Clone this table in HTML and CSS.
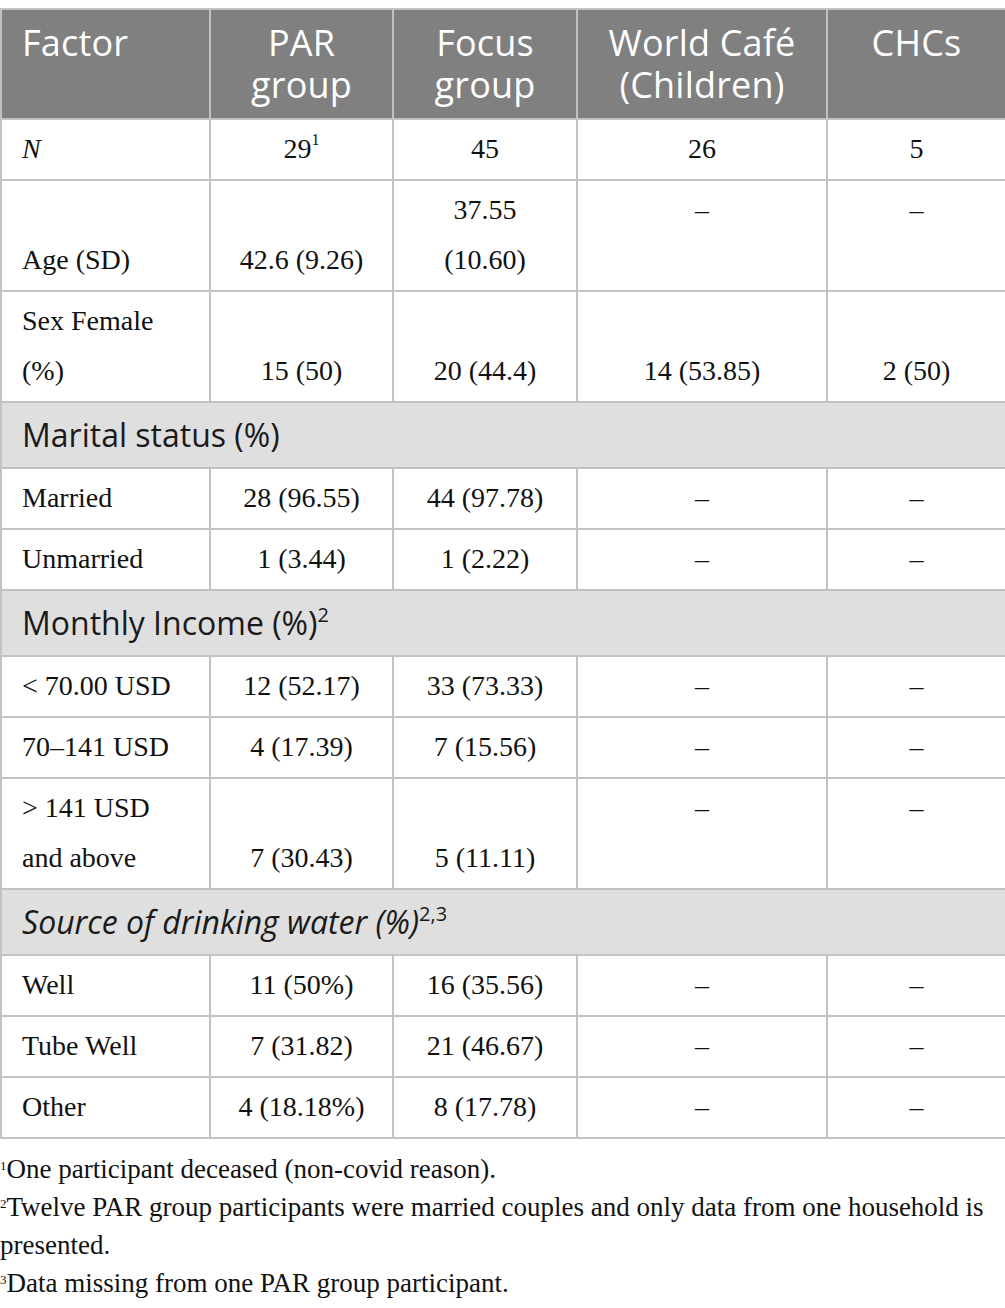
FILE: index.html
```html
<!DOCTYPE html>
<html>
<head>
<meta charset="utf-8">
<link rel="stylesheet" href="styles.css">
</head>
<body>
<table class="data">
  <colgroup>
    <col class="c1"><col class="c2"><col class="c3"><col class="c4"><col class="c5">
  </colgroup>
  <thead>
    <tr class="head">
      <th class="left"><span class="hl">Factor</span></th>
      <th><span class="hl">PAR</span><span class="hl">group</span></th>
      <th><span class="hl">Focus</span><span class="hl">group</span></th>
      <th><span class="hl">World Café</span><span class="hl">(Children)</span></th>
      <th><span class="hl">CHCs</span></th>
    </tr>
  </thead>
  <tbody>
    <tr>
      <td class="left"><i>N</i></td>
      <td>29<sup class="fn">1</sup></td>
      <td>45</td>
      <td>26</td>
      <td>5</td>
    </tr>
    <tr>
      <td class="left"><br>Age (SD)</td>
      <td>42.6 (9.26)</td>
      <td>37.55<br>(10.60)</td>
      <td class="top">–</td>
      <td class="top">–</td>
    </tr>
    <tr>
      <td class="left">Sex Female<br>(%)</td>
      <td>15 (50)</td>
      <td>20 (44.4)</td>
      <td>14 (53.85)</td>
      <td>2 (50)</td>
    </tr>
    <tr class="section">
      <td colspan="5">Marital status (%)</td>
    </tr>
    <tr>
      <td class="left">Married</td>
      <td>28 (96.55)</td>
      <td>44 (97.78)</td>
      <td>–</td>
      <td>–</td>
    </tr>
    <tr>
      <td class="left">Unmarried</td>
      <td>1 (3.44)</td>
      <td>1 (2.22)</td>
      <td>–</td>
      <td>–</td>
    </tr>
    <tr class="section">
      <td colspan="5">Monthly Income (%)<sup class="ss">2</sup></td>
    </tr>
    <tr>
      <td class="left">&lt; 70.00 USD</td>
      <td>12 (52.17)</td>
      <td>33 (73.33)</td>
      <td>–</td>
      <td>–</td>
    </tr>
    <tr>
      <td class="left">70–141 USD</td>
      <td>4 (17.39)</td>
      <td>7 (15.56)</td>
      <td>–</td>
      <td>–</td>
    </tr>
    <tr>
      <td class="left">&gt; 141 USD<br>and above</td>
      <td>7 (30.43)</td>
      <td>5 (11.11)</td>
      <td class="top">–</td>
      <td class="top">–</td>
    </tr>
    <tr class="section">
      <td colspan="5"><i>Source of drinking water (%)</i><sup class="ss">2,3</sup></td>
    </tr>
    <tr>
      <td class="left">Well</td>
      <td>11 (50%)</td>
      <td>16 (35.56)</td>
      <td>–</td>
      <td>–</td>
    </tr>
    <tr>
      <td class="left">Tube Well</td>
      <td>7 (31.82)</td>
      <td>21 (46.67)</td>
      <td>–</td>
      <td>–</td>
    </tr>
    <tr>
      <td class="left">Other</td>
      <td>4 (18.18%)</td>
      <td>8 (17.78)</td>
      <td>–</td>
      <td>–</td>
    </tr>
  </tbody>
</table>
<div class="notes">
  <p><sup class="nm">1</sup>One participant deceased (non-covid reason).</p>
  <p><sup class="nm">2</sup>Twelve PAR group participants were married couples and only data from one household is presented.</p>
  <p><sup class="nm">3</sup>Data missing from one PAR group participant.</p>
</div>
</body>
</html>
```

FILE: styles.css
```css
html, body {
  margin: 0;
  padding: 0;
  background: #ffffff;
}
body {
  padding-top: 8px;
  color: #111111;
}
.data {
  width: 1005px;
  border-collapse: collapse;
  table-layout: fixed;
  font-family: "Liberation Serif", "Times New Roman", serif;
  font-size: 28px;
}
.c1 { width: 209px; }
.c2 { width: 183px; }
.c3 { width: 184px; }
.c4 { width: 250px; }
.c5 { width: 179px; }

.data th, .data td {
  border: 2px solid #c2c2c2;
  text-align: center;
  padding: 4px 20px 5px 20px;
  line-height: 50px;
  vertical-align: bottom;
}
.data .left { text-align: left; }
.data .top { vertical-align: top; }

.head th {
  background: #808080;
  color: #ffffff;
  font-family: "Open Sans", "Noto Sans", sans-serif;
  font-weight: 400;
  font-size: 36px;
  line-height: 42px;
  padding: 12px 20px 12px 20px;
  vertical-align: top;
  letter-spacing: 0.2px;
}
.head th.left { text-align: left; }
.hl {
  display: block;
  height: 42px;
}

.section td {
  background: #e0dfdf;
  text-align: left;
  font-family: "Open Sans", "Noto Sans", sans-serif;
  font-size: 32px;
  line-height: 55px;
  padding: 4px 20px 5px 20px;
  color: #1a1a1a;
  vertical-align: middle;
}
.ss {
  font-size: 20px;
  line-height: 0;
  vertical-align: 13px;
}
.fn {
  font-size: 16px;
  line-height: 0;
  vertical-align: 13px;
}
.notes {
  font-family: "Liberation Serif", "Times New Roman", serif;
  font-size: 27px;
  line-height: 38px;
  padding-top: 11px;
  color: #111111;
}
.notes p {
  margin: 0;
}
.nm {
  font-size: 13px;
  line-height: 0;
  vertical-align: 8px;
}
```
